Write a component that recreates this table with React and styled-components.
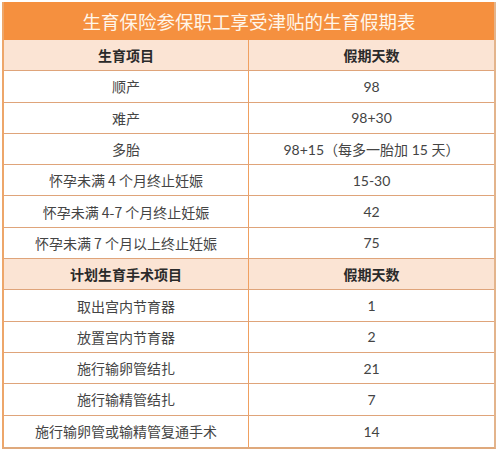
import styled, { createGlobalStyle } from 'styled-components';

const GlobalStyle = createGlobalStyle`
  body {
    margin: 0;
    background: #ffffff;
    font-family: "Noto Sans CJK SC", sans-serif;
  }
`;

const Page = styled.div`
  width: 500px;
  height: 450px;
  padding: 2px 4px 0 2px;
  box-sizing: border-box;
`;

const Table = styled.div`
  width: 494px;
  border-left: 2px solid #eda66a;
  border-right: 2px solid #e3b48c;
  border-bottom: 2px solid #dfa97c;
  box-sizing: border-box;
`;

const Title = styled.div`
  height: 38px;
  background: #f5903f;
  color: #fff6ea;
  font-size: 18.5px;
  display: flex;
  align-items: center;
  justify-content: center;
`;

const Row = styled.div`
  display: grid;
  grid-template-columns: 244px 1fr;
  height: 31.3px;
  box-sizing: border-box;
  border-bottom: ${(p) => (p.$last ? 'none' : '1.5px solid #dfa47a')};
  background: ${(p) => (p.$head ? '#fbe4d4' : '#ffffff')};
`;

const Cell = styled.div`
  display: flex;
  align-items: center;
  justify-content: center;
  color: ${(p) => (p.$head ? '#2a2a2a' : '#444444')};
  font-weight: ${(p) => (p.$head ? 700 : 400)};
  font-size: 14px;
  font-family: ${(p) => (p.$num ? '"Lato", "Noto Sans CJK SC", sans-serif' : '"Noto Sans CJK SC", sans-serif')};
  & + & {
    border-left: 1.5px solid #f0a060;
  }
  white-space: pre;
`;

const rows = [
  { head: true, a: '生育项目', b: '假期天数' },
  { a: '顺产', b: '98' },
  { a: '难产', b: '98+30' },
  { a: '多胎', b: '98+15（每多一胎加 15 天）' },
  { a: '怀孕未满 4 个月终止妊娠', b: '15-30' },
  { a: '怀孕未满 4-7 个月终止妊娠', b: '42' },
  { a: '怀孕未满 7 个月以上终止妊娠', b: '75' },
  { head: true, a: '计划生育手术项目', b: '假期天数' },
  { a: '取出宫内节育器', b: '1' },
  { a: '放置宫内节育器', b: '2' },
  { a: '施行输卵管结扎', b: '21' },
  { a: '施行输精管结扎', b: '7' },
  { a: '施行输卵管或输精管复通手术', b: '14' },
];

export default function App() {
  return (
    <>
      <GlobalStyle />
      <Page>
        <Table>
          <Title>生育保险参保职工享受津贴的生育假期表</Title>
          {rows.map((r, i) => (
            <Row key={i} $head={r.head} $last={i === rows.length - 1}>
              <Cell $head={r.head}>{r.a}</Cell>
              <Cell $head={r.head} $num={!r.head}>{r.b}</Cell>
            </Row>
          ))}
        </Table>
      </Page>
    </>
  );
}
